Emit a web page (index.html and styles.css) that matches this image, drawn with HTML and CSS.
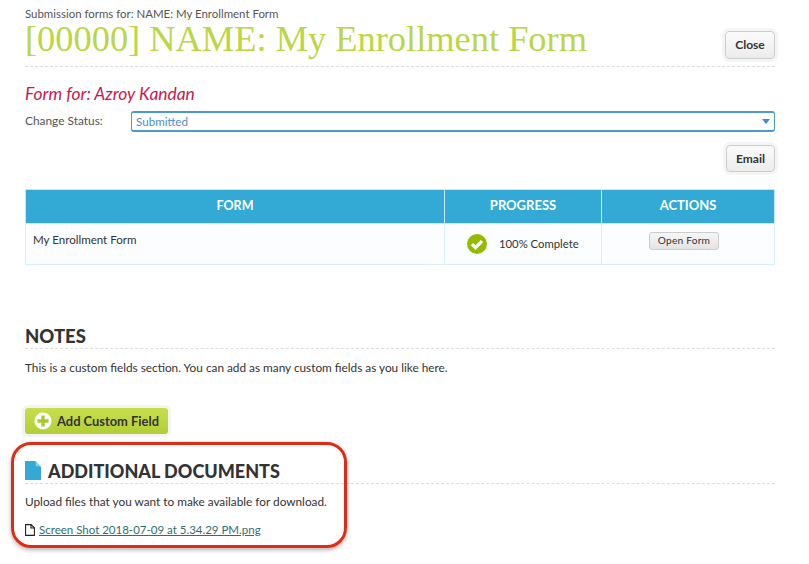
FILE: index.html
```html
<!DOCTYPE html>
<html lang="en">
<head>
<meta charset="utf-8">
<title>Submission forms</title>
<link rel="stylesheet" href="styles.css">
</head>
<body>
<div class="page">
  <header class="head">
    <div class="head-text">
      <div class="crumb">Submission forms for: NAME: My Enrollment Form</div>
      <h1 class="title">[00000] NAME: My Enrollment Form</h1>
    </div>
    <a class="btn btn-close">Close</a>
  </header>
  <h2 class="form-for">Form for: Azroy Kandan</h2>
  <div class="status-row">
    <span class="status-label">Change Status:</span>
    <div class="select"><span>Submitted</span><i class="caret"></i></div>
  </div>
  <div class="email-row"><a class="btn">Email</a></div>
  <table class="grid">
    <thead>
      <tr><th class="c1">FORM</th><th class="c2">PROGRESS</th><th class="c3">ACTIONS</th></tr>
    </thead>
    <tbody>
      <tr>
        <td class="cell-form">My Enrollment Form</td>
        <td class="cell-progress">
          <span class="progress">
            <svg class="check" viewBox="0 0 20 20" width="20" height="20" aria-hidden="true"><circle cx="10" cy="10" r="10" fill="#97b900"/><path d="M5 10.2l3.5 3.5 6.5-6.6" fill="none" stroke="#fff" stroke-width="3.2"/></svg>
            100% Complete
          </span>
        </td>
        <td class="cell-actions"><a class="open-btn">Open Form</a></td>
      </tr>
    </tbody>
  </table>
  <h3 class="section notes">NOTES</h3>
  <p class="copy">This is a custom fields section. You can add as many custom fields as you like here.</p>
  <a class="add-btn">
    <svg viewBox="0 0 18 18" width="18" height="18" aria-hidden="true"><circle cx="9" cy="9" r="8.5" fill="#fff"/><path d="M9 3.5v11M3.5 9h11" stroke="#a9c92f" stroke-width="3.4"/></svg>
    Add Custom Field
  </a>
  <h3 class="section docs">
    <svg viewBox="0 0 16 19" width="16" height="19" aria-hidden="true"><path d="M0 0h10l6 6v13H0z" fill="#33a9d6"/><path d="M10.8 0l5.2 5.2h-5.2z" fill="#8fd0ea"/></svg>
    ADDITIONAL DOCUMENTS
  </h3>
  <p class="copy upload">Upload files that you want to make available for download.</p>
  <div class="file">
    <svg viewBox="0 0 10 12" width="10" height="12" aria-hidden="true"><path d="M.6.6h5.6l3.2 3.2v7.6H.6zM6 .6v3.4h3.4" fill="none" stroke="#222" stroke-width="1.1"/></svg>
    <a class="file-link">Screen Shot 2018-07-09 at 5.34.29 PM.png</a>
  </div>
  <div class="callout"></div>
</div>
</body>
</html>
```
FILE: styles.css
```css
* { box-sizing: border-box; }
html, body { margin: 0; background: #fff; }
body { font-family: "Lato", "Liberation Sans", sans-serif; color: #333; font-size: 11px; }
.page { position: relative; width: 809px; height: 564px; padding: 7px 34px 0 25px; overflow: hidden; }
.head { display: flex; justify-content: space-between; align-items: flex-start; height: 60px; border-bottom: 1px dashed #ddd; }
.crumb { font-size: 11.45px; line-height: 13px; color: #555; }
.title { margin: 1px 0 0; font: normal 36.4px/36px "Liberation Serif", serif; color: #bbd646; }
.btn { display: block; background: linear-gradient(#fbfbfb, #ececec); border: 1px solid #ccc; border-radius: 4px; box-shadow: 0 0 0 3px #f5f5f5; font-weight: 700; font-size: 12px; line-height: 26px; color: #333; text-align: center; }
.btn-close { width: 50px; height: 28px; margin-top: 24px; }
.form-for { margin: 17px 0 0; font: italic 400 17.4px/20px "Lato", sans-serif; color: #c8174f; }
.status-row { display: flex; align-items: center; margin-top: 6px; height: 22px; }
.status-label { width: 106px; font-size: 11.9px; color: #555; position: relative; top: -1px; }
.select { flex: 1; height: 21px; display: flex; justify-content: space-between; align-items: center; padding: 0 4px; border: 1px solid #4a9ad4; border-width: 2px 1.5px; border-radius: 3px; color: #4a8fc9; font-size: 11.6px; }
.caret { width: 0; height: 0; border: 4.5px solid transparent; border-top: 5px solid #3f8fc9; border-bottom: 0; }
.email-row { display: flex; justify-content: flex-end; margin-top: 13px; }
.email-row .btn { width: 49px; height: 27px; line-height: 25px; }
.grid { width: 750px; margin-top: 17px; border-collapse: collapse; table-layout: fixed; }
.grid th { height: 34px; background: #33a9d6; color: #fff; font-size: 13px; font-weight: 700; border: 1px solid #c9e8f5; padding: 0 0 3px; }
.grid th.c1 { font-size: 12.5px; }
.grid td { height: 41px; background: #fbfdff; border: 1px solid #d9eff8; font-size: 11.3px; color: #333; padding: 0; vertical-align: top; }
.c1 { width: 419px; }
.c2 { width: 157px; }
.grid .cell-form { padding: 9px 0 0 7px; line-height: 13px; font-size: 11.55px; }
.progress { display: flex; align-items: center; gap: 12px; padding: 10px 0 0 22px; line-height: 20px; }
.cell-actions { text-align: center; }
.open-btn { display: inline-block; width: 70px; height: 18px; margin-top: 8px; margin-right: 8px; border: 1px solid #ccc; border-radius: 3px; background: linear-gradient(#f6f6f6, #e4e4e4); font-size: 10.2px; line-height: 15px; color: #333; letter-spacing: .2px; text-align: center; }
.section { margin: 0; color: #333; font-weight: 900; border-bottom: 1px dashed #ddd; }
.notes { margin-top: 60px; font-size: 18.5px; line-height: 22px; height: 24px; }
.copy { margin: 0; font-size: 11.8px; line-height: 14px; color: #333; }
.notes + .copy { margin-top: 12px; }
.add-btn { display: flex; align-items: center; gap: 5px; width: 143px; height: 26px; margin-top: 33px; padding-left: 9px; background: linear-gradient(#c8de4c, #b2cf36); border-radius: 3px; box-shadow: 0 0 0 3px #f4f4f4; font-size: 12.9px; font-weight: 700; color: #333; }
.docs { display: flex; align-items: center; gap: 7px; margin-top: 18px; height: 32px; padding-top: 6px; font-size: 18px; line-height: 22px; }
.upload { margin-top: 11px; }
.file { display: flex; align-items: center; gap: 4px; margin-top: 14px; line-height: 14px; font-size: 11.5px; }
.file-link { color: #2f6f6f; text-decoration: underline; }
.callout { position: absolute; left: 11px; top: 442px; width: 336px; height: 106px; border: 3px solid #e22b12; border-radius: 20px; box-shadow: 0 2px 4px rgba(0,0,0,.3); }
```
